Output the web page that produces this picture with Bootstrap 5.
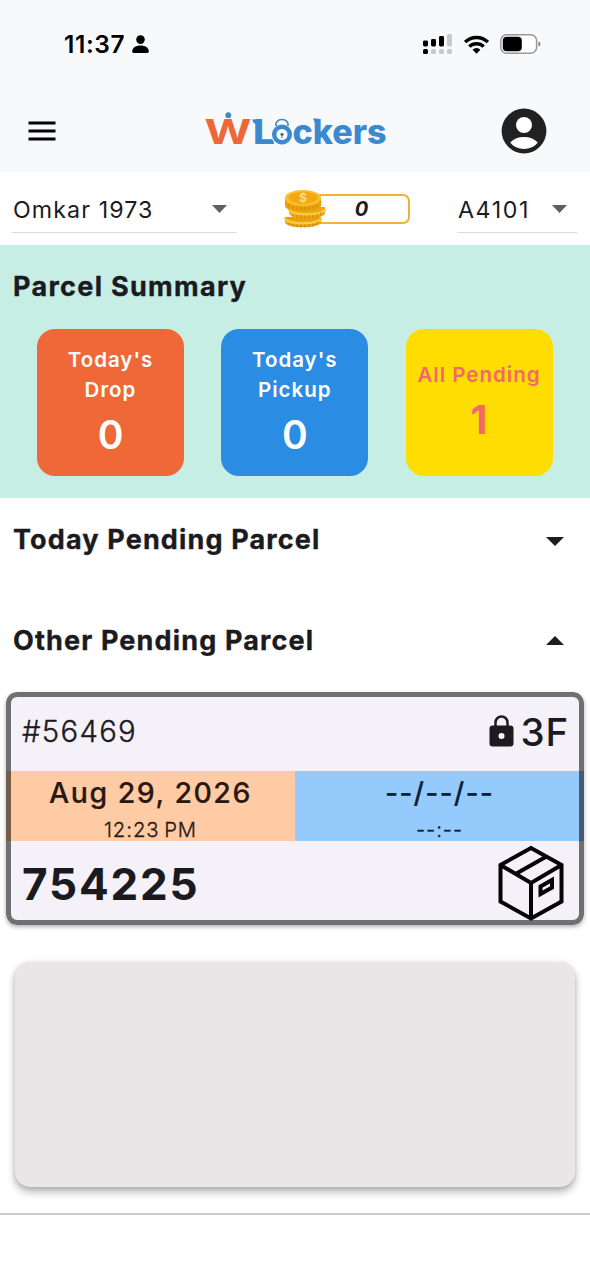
<!DOCTYPE html>
<html lang="en">
<head>
<meta charset="utf-8">
<meta name="viewport" content="width=device-width, initial-scale=1">
<title>WLockers</title>
<link href="https://cdn.jsdelivr.net/npm/bootstrap@5.3.0/dist/css/bootstrap.min.css" rel="stylesheet">
<style>
body{font-family:Inter,"Liberation Sans",sans-serif;color:#1b1b1f;background:#fff;height:1280px;overflow:hidden}
svg{display:block;flex:none}
.t{white-space:nowrap;line-height:1}
.top-area{background:#f8f9fb;height:172px}
.status-row{height:88px;padding-left:64px;padding-right:49px}
.clock{font-size:24.5px;font-weight:600;color:#000;letter-spacing:.6px;padding-top:1px}
.app-row{height:84px;padding:2px 43px 0 28px}
.pick-row{height:73px;padding:0 13px 0 12px}
.picker{height:48px;border-bottom:1px solid #dcdce0;margin-top:13px;font-size:23.2px;padding-right:10px}
.picker .t{padding-top:4px;padding-left:1px}
.picker-user{width:225px;letter-spacing:1.1px}
.picker-unit{width:120px;letter-spacing:1.6px}
.coins{width:126px;height:40px;margin-top:1px}
.coin-pill{width:97px;height:30px;border:2px solid #edb236;border-radius:7px;font-size:20px;font-weight:700;font-style:italic;margin-left:-13px}
.summary{background:#c6eee5;height:253px;padding:28px 37.5px 0 37px}
.h-title{font-size:27px;font-weight:700;letter-spacing:1.15px;-webkit-text-stroke:.35px currentColor}
.summary .h-title{margin-left:-24px;letter-spacing:1.3px}
.tile-row{margin-top:29px}
.tile{width:147px;height:147px;border-radius:18px;font-weight:600;color:#fff}
.tile-label{font-size:20.5px;line-height:30px;letter-spacing:1px}
.tile-num{font-size:39px;line-height:48px;margin-top:6px;margin-bottom:1px;font-weight:600}
.t-drop{background:#ef6837}.t-pick{background:#2b8ce3}.t-all{background:#fd0;color:#f3686a}
.t-all .tile-num{font-weight:700}
.section-row{padding:0 26px 0 13px}
.sec-a{height:82px}
.sec-b{height:112px;padding-top:8px}
.parcel{margin:0 6px;height:233px;border-radius:11px;background:#f4f1f9;box-shadow:0 2px 4px rgba(0,0,0,.3);overflow:hidden;position:relative}
.parcel::after{content:"";position:absolute;inset:0;border:5px solid rgba(0,0,0,.54);border-radius:11px}
.p-head{height:79px;padding:0 15px 0 16px}
.p-id{font-size:29.3px;font-weight:300;letter-spacing:1.3px;-webkit-text-stroke:.35px currentColor}
.p-slot{font-size:38.5px;font-weight:500;letter-spacing:.8px;padding-top:1px}
.p-band{height:70px}
.p-from{background:#fecba4;color:#2a1810}.p-to{background:#95cbfc;color:#0c2036}
.p-date{font-size:28.5px;font-weight:500;letter-spacing:1.5px;margin-top:8px;-webkit-text-stroke:.2px currentColor}
.p-to .p-date{letter-spacing:1.1px}
.p-time{font-size:20.3px;font-weight:300;letter-spacing:.95px;margin-top:12px;-webkit-text-stroke:.3px currentColor}
.p-foot{height:84px;padding:0 19px 0 16px}
.p-code{font-size:44px;font-weight:700;letter-spacing:1.8px;padding-top:2px}
.blank-box{margin:37px 15px 0;height:225px;border-radius:15px;background:#e8e6e7;box-shadow:0 5px 9px rgba(0,0,0,.28),0 1px 5px rgba(0,0,0,.12)}
.base-line{height:2px;margin-top:26px;background:#cbccd0}
</style>
</head>
<body>
<header class="top-area">
  <div class="status-row d-flex align-items-center justify-content-between">
    <div class="d-flex align-items-center">
      <span class="t clock">11:37</span>
      <svg style="margin-left:7px" width="17" height="19" viewBox="0 0 17 19"><circle cx="8.5" cy="4.6" r="4.3"/><path d="M.2 16.6C.2 12.6 4 10.600 8.500 10.600s8.300 2 8.300 6Q16.800 18 15.200 18H1.800Q.2 18 .2 16.600Z"/></svg>
    </div>
    <div class="d-flex align-items-center">
      <svg width="30" height="21" viewBox="0 0 30 21"><g fill="#000"><rect y="6.500" width="5" height="6" rx="1.400"/><rect x="8" y="5" width="5" height="7.500" rx="1.400"/><rect x="16" y="2" width="5" height="10.500" rx="1.400"/><rect y="15" width="5" height="5" rx="1.500"/></g><g fill="#c9c9cb"><rect x="24" width="5" height="12.500" rx="1.400"/><rect x="8" y="15" width="5" height="5" rx="1.500"/><rect x="16" y="15" width="5" height="5" rx="1.500"/><rect x="24" y="15" width="5" height="5" rx="1.500"/></g></svg>
      <svg style="margin-left:11px" width="25" height="19" viewBox="0 0 25 19"><g fill="none" stroke="#000" stroke-width="3.500"><path d="M1.200 7.100a16 16 0 0 1 22.600 0"/><path d="M5.300 11.600a10.300 10.300 0 0 1 14.400 0"/></g><path d="M8.600 14.700a5.600 5.600 0 0 1 7.800 0L12.500 18.800Z"/></svg>
      <svg style="margin-left:11px" width="41" height="20" viewBox="0 0 41 20"><rect x=".8" y=".8" width="35.800" height="18.400" rx="6" fill="#fff" stroke="#98989b" stroke-width="1.500"/><rect x="2.800" y="2.800" width="19" height="14.400" rx="4"/><path d="M38.500 7.500q2 .8 2 2.500t-2 2.500Z" fill="#77777a"/></svg>
    </div>
  </div>
  <nav class="app-row d-flex align-items-center justify-content-between">
    <svg width="28" height="20" viewBox="0 0 28 20"><path d="M.5 2h27M.5 10h27M.5 18h27" stroke="#000" stroke-width="3"/></svg>
    <svg style="margin-left:32px" width="190" height="54" viewBox="200 104 190 54" font-family="Inter, sans-serif" font-weight="800" font-size="34">
      <text x="204.500" y="144" fill="#ec6839" font-weight="700" textLength="47" lengthAdjust="spacingAndGlyphs">W</text>
      <circle cx="228.300" cy="115.200" r="2.900" fill="#3b8ad0"/>
      <g fill="#3b8ad0"><path d="M252 119.500h6v4h-4Z"/><text x="253" y="144" textLength="22" lengthAdjust="spacingAndGlyphs">L</text>
      <text x="292.500" y="144" textLength="94" lengthAdjust="spacingAndGlyphs">ckers</text><path d="M313 118.500h5v4.500h-3Z"/></g>
      <circle cx="282" cy="134.500" r="10.800" fill="#f8f9fb"/>
      <circle cx="282" cy="134.500" r="7.800" fill="#fff" stroke="#3b8ad0" stroke-width="4.500"/>
      <path d="M276 126v-2a6 4.500 0 0 1 12 0v2" fill="none" stroke="#4f86b4" stroke-width="1.700"/>
      <circle cx="282" cy="134.300" r="1.600" fill="#3b6eaa"/><path d="M282 135v3.200" stroke="#3b6eaa"/>
    </svg>
    <svg width="46" height="46" viewBox="0 0 46 46"><circle cx="23" cy="23" r="22.400" fill="#212121"/><circle cx="23" cy="17" r="8" fill="#fff"/><path d="M9.200 34.500Q14 28.900 23 28.900t13.800 5.600Q32 41 23 41T9.200 34.500Z" fill="#fff"/></svg>
  </nav>
</header>

<section class="pick-row d-flex align-items-start justify-content-between">
  <div class="picker picker-user d-flex align-items-center justify-content-between"><span class="t">Omkar 1973</span><svg width="15" height="8" viewBox="0 0 15 8"><path d="M0 0h15L7.500 8Z" fill="#5f5f63"/></svg></div>
  <div class="coins d-flex align-items-center align-self-center">
    <svg class="position-relative z-1" width="42" height="40" viewBox="0 0 42 40">
      <path d="M1 28v5c0 7 36 7 36 0v-5Z" fill="#e9a20e"/>
      <path d="M1 29c0 7 36 7 36 0" fill="none" stroke="#fdc940" stroke-width="2.500"/>
      <path d="M5 18v6c0 7 36 7 36 0v-6Z" fill="#eda510"/>
      <path d="M5 20c0 7 36 7 36 0" fill="none" stroke="#fdc940" stroke-width="2.500"/>
      <path d="M1 9v8c0 7 36 7 36 0V9Z" fill="#e9a20e"/>
      <path d="M5 15.500v3m4-1.500v3m4-2.300v3m4-2.800v3m4-3v3m4-3.300v3m4-3.700v3m4-4.500v3M9 25.500v3m4-2.300v3m4-2.800v3m4-2.800v3m4-3v3m4-3.300v3m4-4v3m4-5v3M5 34v2m4-1.300v3m4-2.500v3m4-2.800v3m4-3v3m4-3.300v3m4-3.700v3m4-4.500v2.500" stroke="#cf8809" stroke-width="1.100"/>
      <ellipse cx="19" cy="9" rx="18" ry="8" fill="#fdbf2d"/>
      <ellipse cx="19" cy="8.700" rx="14.500" ry="6" fill="#f3a711"/>
      <text x="19" y="13" font-size="12" font-weight="700" font-family="Inter,sans-serif" text-anchor="middle" fill="#ffdc7a">$</text>
    </svg>
    <div class="coin-pill d-flex align-items-center justify-content-center bg-white"><span class="t">0</span></div>
  </div>
  <div class="picker picker-unit d-flex align-items-center justify-content-between"><span class="t">A4101</span><svg width="15" height="8" viewBox="0 0 15 8"><path d="M0 0h15L7.500 8Z" fill="#5f5f63"/></svg></div>
</section>

<section class="summary">
  <h2 class="t h-title mb-0">Parcel Summary</h2>
  <div class="tile-row d-flex justify-content-between text-center">
    <div class="tile t-drop d-flex flex-column justify-content-center"><div class="tile-label">Today's<br>Drop</div><div class="tile-num">0</div></div>
    <div class="tile t-pick d-flex flex-column justify-content-center"><div class="tile-label">Today's<br>Pickup</div><div class="tile-num">0</div></div>
    <div class="tile t-all d-flex flex-column justify-content-center"><div class="tile-label text-nowrap">All Pending</div><div class="tile-num">1</div></div>
  </div>
</section>

<div class="section-row sec-a d-flex align-items-center justify-content-between"><h2 class="t h-title mb-0">Today Pending Parcel</h2><svg class="mt-1" width="18" height="9" viewBox="0 0 18 9"><path d="M0 0h18L9 9Z" fill="#1d1d1f"/></svg></div>
<div class="section-row sec-b d-flex align-items-center justify-content-between"><h2 class="t h-title mb-0">Other Pending Parcel</h2><svg width="18" height="9" viewBox="0 0 18 9"><path d="M0 9h18L9 0Z" fill="#1d1d1f"/></svg></div>

<article class="parcel">
  <div class="p-head d-flex align-items-center justify-content-between">
    <span class="t p-id">#56469</span>
    <div class="d-flex align-items-center">
      <svg width="25" height="34" viewBox="0 0 25 34"><rect x=".5" y="10.500" width="24" height="21" rx="3" fill="#1d1b20"/><path d="M6.500 12V7.500a6 6 0 0 1 12 0V12" fill="none" stroke="#1d1b20" stroke-width="2.500"/><circle cx="12.500" cy="21" r="3" fill="#fff"/></svg>
      <span class="t p-slot" style="margin-left:7px">3F</span>
    </div>
  </div>
  <div class="p-band d-flex text-center">
    <div class="p-from w-50"><div class="t p-date">Aug 29, 2026</div><div class="t p-time">12:23&#8239;PM</div></div>
    <div class="p-to w-50"><div class="t p-date">--/--/--</div><div class="t p-time">--:--</div></div>
  </div>
  <div class="p-foot d-flex align-items-center justify-content-between">
    <span class="t p-code">754225</span>
    <svg width="68" height="76" viewBox="0 0 68 76"><g fill="none" stroke="#050505" stroke-width="4"><path d="M34 3 64.500 20V56.500L34 73.500 3.500 56.500V20ZM3.500 20 34 38 64.500 20M34 38V73M18.500 29 49.500 11.500"/><path d="M43.500 41.500 55 35v7.500L43.500 49Z"/></g></svg>
  </div>
</article>

<div class="blank-box"></div>
<div class="base-line"></div>
<script src="https://cdn.jsdelivr.net/npm/bootstrap@5.3.0/dist/js/bootstrap.bundle.min.js"></script>
</body>
</html>
